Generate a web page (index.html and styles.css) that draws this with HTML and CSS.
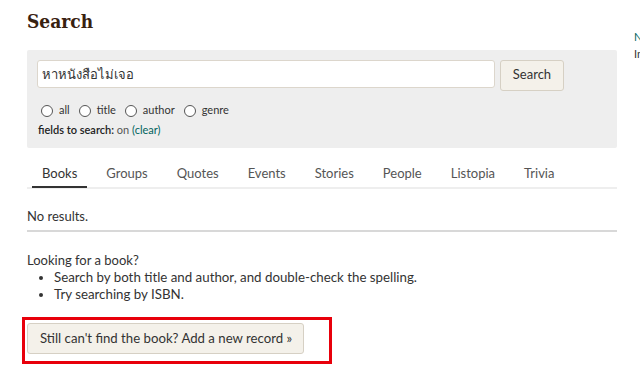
FILE: index.html
```html
<!DOCTYPE html>
<html lang="en">
<head>
<meta charset="utf-8">
<title>Search</title>
<link rel="stylesheet" href="styles.css">
</head>
<body>
<div class="page">
  <div class="main">
    <h1 class="title">Search</h1>
    <div class="searchbox">
      <div class="search-row">
        <div class="input">หาหนังสือไม่เจอ</div>
        <div class="btn">Search</div>
      </div>
      <div class="radios">
        <span class="radio"></span><span class="rlabel">all</span>
        <span class="radio"></span><span class="rlabel">title</span>
        <span class="radio"></span><span class="rlabel">author</span>
        <span class="radio"></span><span class="rlabel">genre</span>
      </div>
      <div class="fields"><span class="fl">fields to search:</span> <span class="on">on</span> <span class="link">(clear)</span></div>
    </div>
    <div class="tabs">
      <span class="tab active">Books</span>
      <span class="tab">Groups</span>
      <span class="tab">Quotes</span>
      <span class="tab">Events</span>
      <span class="tab">Stories</span>
      <span class="tab">People</span>
      <span class="tab">Listopia</span>
      <span class="tab">Trivia</span>
    </div>
    <div class="results">No results.</div>
    <div class="looking">
      <div>Looking for a book?</div>
      <ul class="tips">
        <li>Search by both title and author, and double-check the spelling.</li>
        <li>Try searching by ISBN.</li>
      </ul>
    </div>
    <div class="highlight">
      <div class="addbtn">Still can't find the book? Add a new record »</div>
    </div>
  </div>
  <div class="side">
    <div class="side-link">New releases</div>
    <div class="side-text">In the news</div>
  </div>
</div>
</body>
</html>
```
FILE: styles.css
```css
html, body {
  margin: 0;
  padding: 0;
  background: #fff;
  overflow: hidden;
}
body {
  width: 640px;
  height: 380px;
  font-family: Lato, "Noto Sans", "DejaVu Sans", sans-serif;
  color: #333;
}
.page {
  display: flex;
  gap: 17px;
  padding-left: 27px;
}
.main {
  width: 590px;
  flex: none;
}
.title {
  margin: 0;
  padding-top: 6px;
  height: 44px;
  font-family: "DejaVu Serif", "Liberation Serif", serif;
  font-stretch: condensed;
  font-weight: bold;
  font-size: 19px;
  line-height: 30px;
  color: #382110;
}
.searchbox {
  background: #eeeeee;
  border-radius: 2px;
  padding: 10px 10px 12px 10px;
  height: 76px;
}
.search-row {
  display: flex;
  gap: 5px;
  align-items: flex-start;
}
.input {
  width: 448px;
  height: 26px;
  background: #fff;
  border: 1px solid #dcd6cc;
  border-radius: 3px;
  padding: 0 4px;
  font-size: 13px;
  line-height: 26px;
  color: #333;
}
.btn {
  width: 62px;
  height: 29px;
  background: #f4f1ea;
  border: 1px solid #d6d0c4;
  border-radius: 3px;
  text-align: center;
  font-size: 13px;
  line-height: 27px;
  color: #333;
}
.radios {
  display: flex;
  align-items: center;
  margin-top: 11px;
  height: 14px;
  font-size: 11px;
  padding-left: 4px;
}
.radio {
  width: 10px;
  height: 10px;
  border: 1px solid #555;
  border-radius: 50%;
  background: #fff;
  margin-top: 4px;
  margin-right: 6px;
}
.rlabel {
  margin-right: 9px;
  color: #333;
}
.fields {
  margin-top: 7px;
  font-size: 11px;
  line-height: 14px;
  padding-left: 1px;
}
.fl {
  color: #222;
  font-weight: 600;
}
.on {
  color: #555;
}
.link {
  color: #00635d;
}
.tabs {
  display: flex;
  gap: 9px;
  padding-left: 5px;
  margin-top: 12px;
  border-bottom: 2px solid #eeeeee;
}
.tab {
  padding: 2px 10px 0 10px;
  font-size: 13px;
  line-height: 22px;
  color: #555;
  border-bottom: 2px solid transparent;
  margin-bottom: -2px;
  box-sizing: border-box;
  height: 28px;
}
.tab.active {
  color: #333;
  border-bottom: 2px solid #333;
  margin-bottom: -1px;
}
.results {
  font-size: 13px;
  line-height: 18px;
  padding-top: 18px;
  padding-bottom: 5px;
  border-bottom: 2px solid #d8d8d8;
}
.looking {
  margin-top: 20px;
  font-size: 13px;
  line-height: 17px;
  color: #333;
}
.tips {
  margin: 0;
  padding-left: 27px;
  font-size: 13.3px;
}
.highlight {
  display: inline-block;
  border: 3px solid #e8000b;
  padding: 3px 25px 7px 2px;
  margin-left: -5px;
  margin-top: 14px;
}
.addbtn {
  height: 29px;
  background: #f4f1ea;
  border: 1px solid #d6d0c4;
  border-radius: 3px;
  padding: 0 11px 0 12px;
  font-size: 13.2px;
  line-height: 29px;
  color: #333;
  white-space: nowrap;
}
.side {
  padding-top: 28px;
  font-size: 11px;
  line-height: 17px;
  white-space: nowrap;
  flex: none;
}
.side-link {
  color: #00635d;
}
.side-text {
  color: #333;
}
```
